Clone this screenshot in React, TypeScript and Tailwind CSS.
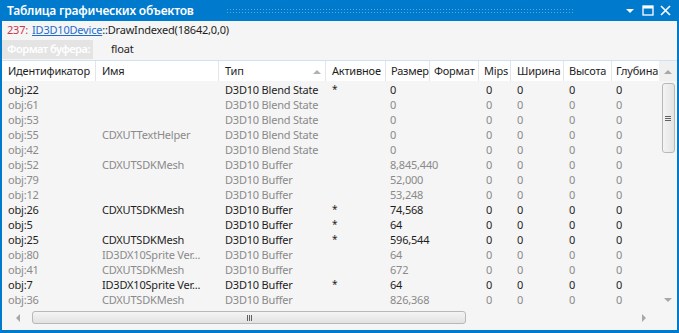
import React from 'react';

type Row = {
  id: string;
  name: string;
  type: string;
  active: boolean;
  size: string;
};

const rows: Row[] = [
  { id: 'obj:22', name: '', type: 'D3D10 Blend State', active: true, size: '0' },
  { id: 'obj:61', name: '', type: 'D3D10 Blend State', active: false, size: '0' },
  { id: 'obj:53', name: '', type: 'D3D10 Blend State', active: false, size: '0' },
  { id: 'obj:55', name: 'CDXUTTextHelper', type: 'D3D10 Blend State', active: false, size: '0' },
  { id: 'obj:42', name: '', type: 'D3D10 Blend State', active: false, size: '0' },
  { id: 'obj:52', name: 'CDXUTSDKMesh', type: 'D3D10 Buffer', active: false, size: '8,845,440' },
  { id: 'obj:79', name: '', type: 'D3D10 Buffer', active: false, size: '52,000' },
  { id: 'obj:12', name: '', type: 'D3D10 Buffer', active: false, size: '53,248' },
  { id: 'obj:26', name: 'CDXUTSDKMesh', type: 'D3D10 Buffer', active: true, size: '74,568' },
  { id: 'obj:5', name: '', type: 'D3D10 Buffer', active: true, size: '64' },
  { id: 'obj:25', name: 'CDXUTSDKMesh', type: 'D3D10 Buffer', active: true, size: '596,544' },
  { id: 'obj:80', name: 'ID3DX10Sprite Ver...', type: 'D3D10 Buffer', active: false, size: '64' },
  { id: 'obj:41', name: 'CDXUTSDKMesh', type: 'D3D10 Buffer', active: false, size: '672' },
  { id: 'obj:7', name: 'ID3DX10Sprite Ver...', type: 'D3D10 Buffer', active: true, size: '64' },
  { id: 'obj:36', name: 'CDXUTSDKMesh', type: 'D3D10 Buffer', active: false, size: '826,368' },
];

const cols = 'grid grid-cols-[94px_123px_107px_60px_44px_49px_32px_53px_48px_48px]';

const headers = [
  { label: 'Идентификатор', pl: 'pl-[6px]' },
  { label: 'Имя', pl: 'pl-[6px]' },
  { label: 'Тип', pl: 'pl-[6px]' },
  { label: 'Активное', pl: 'pl-[6px]' },
  { label: 'Размер', pl: 'pl-[5px]' },
  { label: 'Формат', pl: 'pl-[4px]' },
  { label: 'Mips', pl: 'pl-[5px]' },
  { label: 'Ширина', pl: 'pl-[6px]' },
  { label: 'Высота', pl: 'pl-[5px]' },
  { label: 'Глубина', pl: 'pl-[4px]' },
];

function TitleBar() {
  return (
    <div className="flex h-[21px] items-center bg-[#007acc] pl-[5px] pr-[6px] text-white">
      <span className="text-[12px] font-semibold whitespace-nowrap">Таблица графических объектов</span>
      <div className="ml-[32px] mr-[50px] h-[5px] flex-1 bg-[radial-gradient(circle,#59a8e0_0.7px,transparent_0.8px)] bg-[length:3px_3px]" />
      <svg width="10" height="6" viewBox="0 0 10 6" className="mr-[7px]">
        <path d="M1 1h8L5 5z" fill="white" />
      </svg>
      <svg width="12" height="11" viewBox="0 0 12 11" className="mr-[6px]">
        <rect x="1" y="1" width="10" height="9" fill="none" stroke="white" strokeWidth="1.3" />
        <rect x="1" y="1" width="10" height="2.5" fill="white" />
      </svg>
      <svg width="11" height="11" viewBox="0 0 11 11">
        <path d="M1 1l9 9M10 1l-9 9" stroke="white" strokeWidth="1.6" />
      </svg>
    </div>
  );
}

function VScroll() {
  return (
    <div className="flex w-[18px] flex-col bg-[#f5f5f5]">
      <div className="flex h-[20px] items-center justify-center bg-[#f0f0f0]">
        <svg width="8" height="5" viewBox="0 0 8 5">
          <path d="M0 5L4 1l4 4z" fill="#a8a8a8" />
        </svg>
      </div>
      <div className="flex-1">
        <div className="mx-auto mt-[2px] flex h-[70px] w-[13px] items-center justify-center rounded-[3px] border border-[#b8b8b8] bg-[linear-gradient(to_right,#f4f4f4,#e4e4e4)]">
          <div className="flex flex-col gap-[1px]">
            <div className="h-[1px] w-[6px] bg-[#606060]" />
            <div className="h-[1px] w-[6px] bg-[#606060]" />
            <div className="h-[1px] w-[6px] bg-[#606060]" />
          </div>
        </div>
      </div>
      <div className="flex h-[16px] items-center justify-center">
        <svg width="8" height="5" viewBox="0 0 8 5">
          <path d="M0 0L4 4l4-4z" fill="#a8a8a8" />
        </svg>
      </div>
    </div>
  );
}

function HScroll() {
  return (
    <div className="flex h-[19px] items-center bg-[#f5f5f5]">
      <div className="flex w-[30px] items-center justify-center">
        <svg width="5" height="8" viewBox="0 0 5 8">
          <path d="M5 0L1 4l4 4z" fill="#a8a8a8" />
        </svg>
      </div>
      <div className="flex h-[13px] w-[434px] items-center justify-center rounded-[3px] border border-[#b8b8b8] bg-[linear-gradient(to_bottom,#f4f4f4,#e2e2e2)]">
        <div className="flex gap-[1px]">
          <div className="h-[6px] w-[1px] bg-[#606060]" />
          <div className="h-[6px] w-[1px] bg-[#606060]" />
          <div className="h-[6px] w-[1px] bg-[#606060]" />
        </div>
      </div>
      <div className="flex-1" />
      <div className="flex w-[30px] items-center justify-center">
        <svg width="5" height="8" viewBox="0 0 5 8">
          <path d="M0 0l4 4-4 4z" fill="#a8a8a8" />
        </svg>
      </div>
      <div className="w-[18px] self-stretch bg-[#f5f5f5]" />
    </div>
  );
}

export default function App() {
  return (
    <div className="h-[333px] w-[679px] overflow-hidden bg-[#f5f5f5] font-['Noto_Sans',sans-serif] text-[11px] tracking-[-0.2px] text-[#1e1e1e]">
      <div className="flex h-full flex-col border-x-2 border-b-[3px] border-[#007acc]">
        <TitleBar />
        <div className="flex h-[19px] items-center pl-[5px] whitespace-nowrap">
          <span className="text-[#c8374b]">237:</span>
          <span className="ml-[4px] text-[#1e6ccd] underline">ID3D10Device</span>
          <span>::DrawIndexed(18642,0,0)</span>
        </div>
        <div className="flex h-[19px] items-center">
          <div className="flex h-full w-[91px] items-center bg-[#e4e4e4] pl-[5px] font-semibold tracking-[-0.5px] text-white whitespace-nowrap">
            Формат буфера:
          </div>
          <span className="ml-[18px]">float</span>
        </div>
        <div className="mt-[1px] flex flex-1 flex-col border-t border-[#cde3f5]">
          <div className="flex flex-1">
            <div className="flex flex-1 flex-col overflow-hidden">
              <div className={`${cols} h-[20px] shrink-0 items-center bg-white`}>
                {headers.map((h, i) => (
                  <div
                    key={h.label}
                    className={`relative flex h-full items-center overflow-hidden whitespace-nowrap ${h.pl} ${i < headers.length - 1 ? 'border-r border-[#e5e5e5]' : ''}`}
                  >
                    {h.label}
                    {h.label === 'Тип' && (
                      <svg width="8" height="5" viewBox="0 0 8 5" className="absolute right-[4px] top-[8px]">
                        <path d="M0 5L4 1l4 4z" fill="#b0b0b0" />
                      </svg>
                    )}
                  </div>
                ))}
              </div>
              <div className="pt-[1px]">
                {rows.map((r) => (
                  <div
                    key={r.id}
                    className={`${cols} h-[15px] items-center leading-[15px] whitespace-nowrap ${r.active ? 'text-[#1e1e1e]' : 'text-[#8a8a8a]'}`}
                  >
                    <div className="pl-[6px]">{r.id}</div>
                    <div className="pl-[6px]">{r.name}</div>
                    <div className="pl-[6px]">{r.type}</div>
                    <div className="pl-[6px] text-[10px]">{r.active ? '*' : ''}</div>
                    <div className="pl-[4px]">{r.size}</div>
                    <div />
                    <div className="pl-[7px]">0</div>
                    <div className="pl-[6px]">0</div>
                    <div className="pl-[5px]">0</div>
                    <div className="pl-[4px]">0</div>
                  </div>
                ))}
              </div>
            </div>
            <VScroll />
          </div>
          <HScroll />
          <div className="h-[3px]" />
        </div>
      </div>
    </div>
  );
}
